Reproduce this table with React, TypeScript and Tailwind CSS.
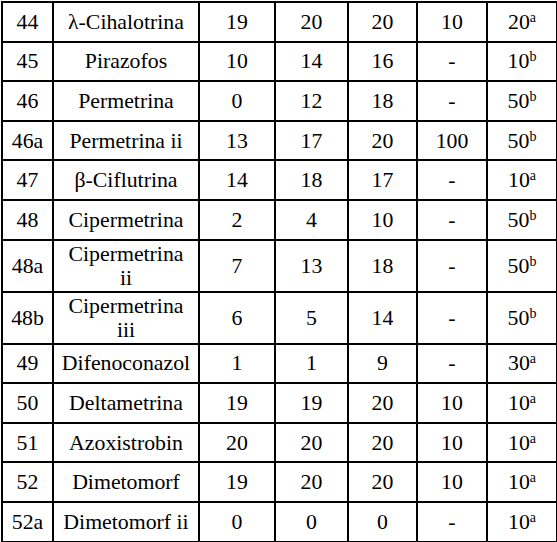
const rows: { id: string; name: string[]; a: string; b: string; c: string; d: string; e: string; sup: string }[] = [
  { id: "44", name: ["λ-Cihalotrina"], a: "19", b: "20", c: "20", d: "10", e: "20", sup: "a" },
  { id: "45", name: ["Pirazofos"], a: "10", b: "14", c: "16", d: "-", e: "10", sup: "b" },
  { id: "46", name: ["Permetrina"], a: "0", b: "12", c: "18", d: "-", e: "50", sup: "b" },
  { id: "46a", name: ["Permetrina ii"], a: "13", b: "17", c: "20", d: "100", e: "50", sup: "b" },
  { id: "47", name: ["β-Ciflutrina"], a: "14", b: "18", c: "17", d: "-", e: "10", sup: "a" },
  { id: "48", name: ["Cipermetrina"], a: "2", b: "4", c: "10", d: "-", e: "50", sup: "b" },
  { id: "48a", name: ["Cipermetrina", "ii"], a: "7", b: "13", c: "18", d: "-", e: "50", sup: "b" },
  { id: "48b", name: ["Cipermetrina", "iii"], a: "6", b: "5", c: "14", d: "-", e: "50", sup: "b" },
  { id: "49", name: ["Difenoconazol"], a: "1", b: "1", c: "9", d: "-", e: "30", sup: "a" },
  { id: "50", name: ["Deltametrina"], a: "19", b: "19", c: "20", d: "10", e: "10", sup: "a" },
  { id: "51", name: ["Azoxistrobin"], a: "20", b: "20", c: "20", d: "10", e: "10", sup: "a" },
  { id: "52", name: ["Dimetomorf"], a: "19", b: "20", c: "20", d: "10", e: "10", sup: "a" },
  { id: "52a", name: ["Dimetomorf ii"], a: "0", b: "0", c: "0", d: "-", e: "10", sup: "a" },
];

export default function App() {
  return (
    <div className="bg-white w-[557px] h-[542px] text-black font-['Liberation_Serif','Times_New_Roman',serif] text-[21.8px] leading-[24px]">
      <table className="border-collapse table-fixed w-[555px] ml-px mt-px">
        <colgroup>
          <col className="w-[51px]" />
          <col className="w-[146px]" />
          <col className="w-[76px]" />
          <col className="w-[73px]" />
          <col className="w-[69px]" />
          <col className="w-[70px]" />
          <col className="w-[70px]" />
        </colgroup>
        <tbody>
          {rows.map((r) => {
            const tall = r.name.length > 1;
            const cell = `border-2 border-black text-center align-middle p-0 ${tall ? "h-[52px]" : "h-[39.6px]"}`;
            return (
              <tr key={r.id}>
                <td className={cell}>{r.id}</td>
                <td className={cell}>
                  {r.name.map((n, i) => (
                    <div key={i}>{n}</div>
                  ))}
                </td>
                <td className={cell}>{r.a}</td>
                <td className={cell}>{r.b}</td>
                <td className={cell}>{r.c}</td>
                <td className={cell}>{r.d}</td>
                <td className={cell}>
                  {r.e}
                  <sup className="text-[14px]">{r.sup}</sup>
                </td>
              </tr>
            );
          })}
        </tbody>
      </table>
    </div>
  );
}
